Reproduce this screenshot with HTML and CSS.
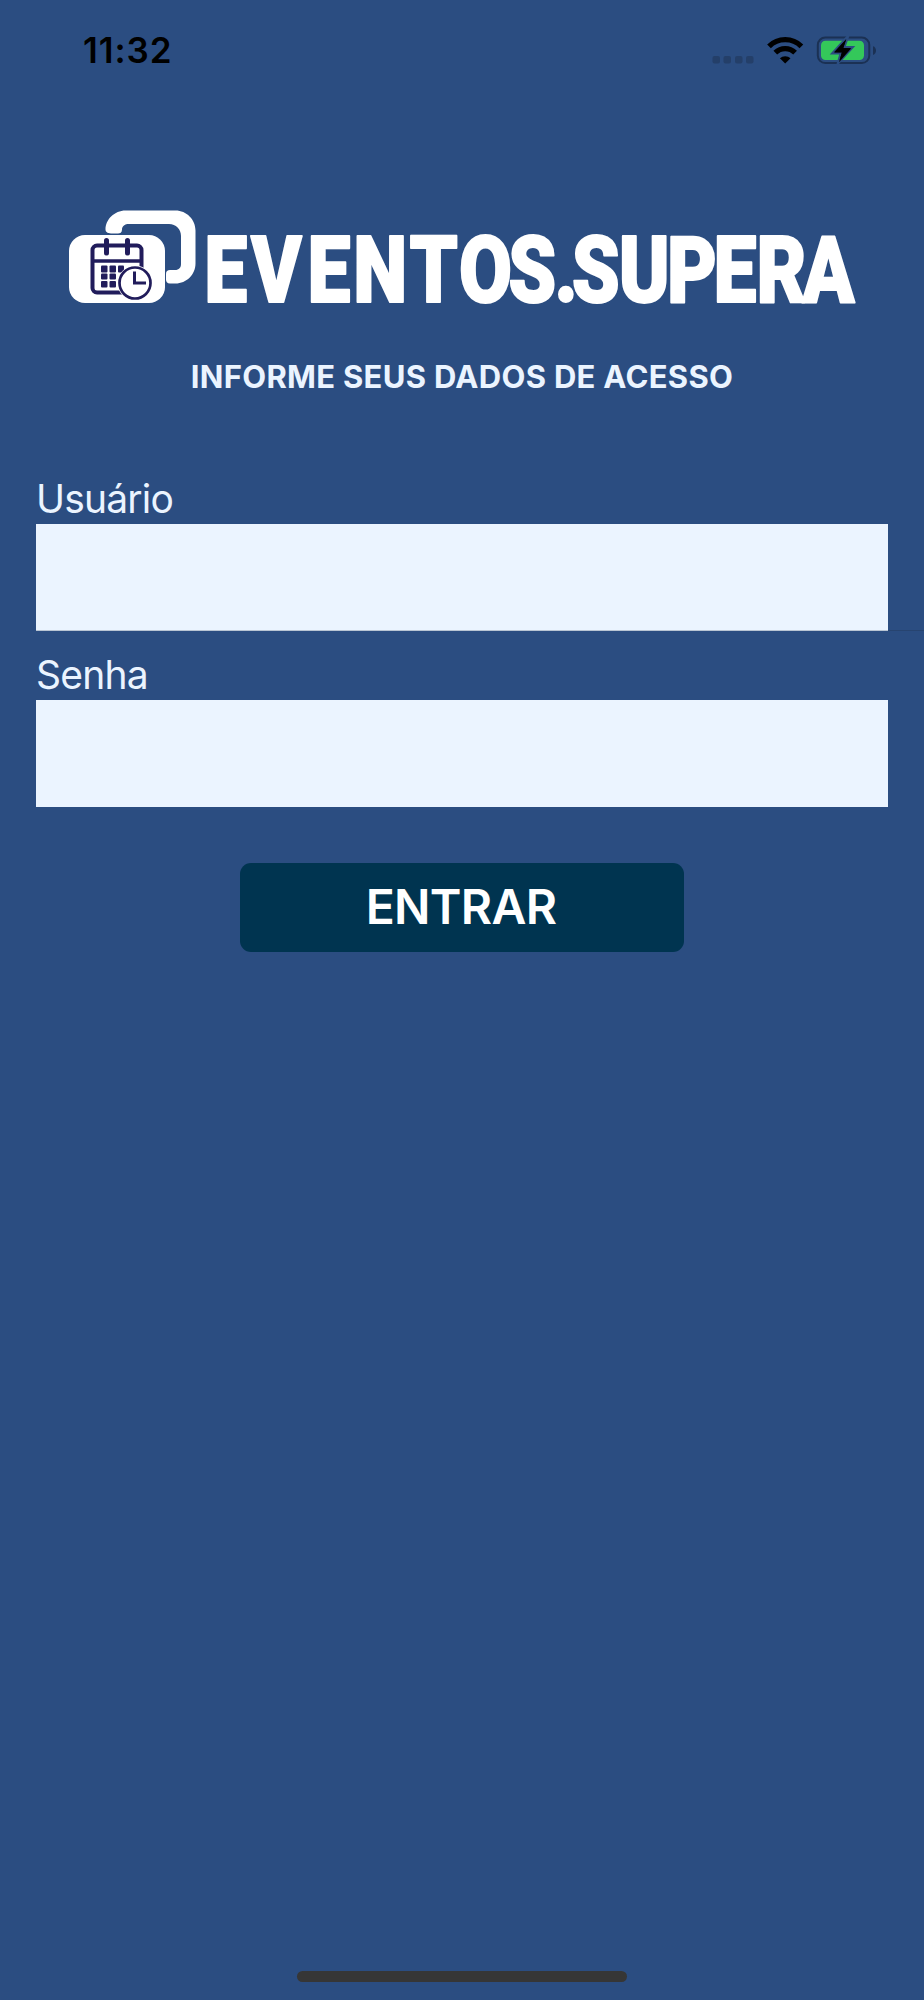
FILE: index.html
```html
<!DOCTYPE html>
<html lang="pt-BR">
<head>
<meta charset="utf-8">
<title>Eventos Supera</title>
<link rel="stylesheet" href="styles.css">
</head>
<body>
<div class="screen">
  <header class="status">
    <span class="time">11:32</span>
    <svg class="indicators" width="200" height="60" viewBox="0 0 200 60">
      <g fill="#243f69"><rect x="22.5" y="36" width="7.5" height="7.5" rx="2"/><rect x="33.5" y="36" width="7.5" height="7.5" rx="2"/><rect x="45" y="36" width="7.5" height="7.5" rx="2"/><rect x="56" y="36" width="7.5" height="7.5" rx="2"/></g>
      <g fill="none" stroke="#000" stroke-width="5.2"><path d="M79 26.4a22.8 22.8 0 0 1 32.4 0"/><path d="M85.3 32.7a14 14 0 0 1 19.8 0"/></g>
      <path d="M95.2 43.5l-5.3-5.2a7.6 7.6 0 0 1 10.6 0z"/>
      <rect x="127.8" y="17.5" width="51.5" height="25.6" rx="7.5" fill="none" stroke="#1b3154" stroke-width="2"/>
      <rect x="131" y="20.8" width="43" height="19.2" rx="4.5" fill="#34c85a"/>
      <path d="M183 26.3c4 1 4 7.600 0 8.600z" fill="#1b3154"/>
      <path d="M157 17L142 33.500h8.500L147.500 44 163 27h-8.500l3.500-10z" stroke="#2b4d81" stroke-width="2"/>
      <path d="M156.300 19L144 32.300h8L149 42.200 161.300 28.300h-8z"/>
    </svg>
  </header>
  <main class="login">
    <svg class="logo" width="800" height="120" viewBox="68 197 800 120">
      <path d="M112.500 233.500c-4 0-7-1-7-4 0-10 9-19 20-19h50c11 0 20 9 20 20v33c0 11-9 20-20 20h-5.500c-3 0-4-2-4-4v-5.500c0-3 1.500-4 4-4h5c4 0 6-2.500 6-6v-28c0-7-5-12-12-12h-40c-4 0-7 2-7 5.500 0 3-2 4-4 4z" fill="#fff"/>
      <rect x="69" y="235" width="96" height="68" rx="16" fill="#fff"/>
      <g fill="none" stroke="#211c5b">
        <rect x="92.500" y="245.500" width="49" height="47" rx="4.500" stroke-width="4"/>
        <path d="M92 261h50" stroke-width="3.300"/>
        <path d="M106.500 240.500v12.500M127.500 240.500v12.500" stroke-width="5" stroke-linecap="round"/>
      </g>
      <g fill="#211c5b"><rect x="101" y="265.500" width="6.500" height="7" rx="1"/><rect x="109.500" y="265.500" width="6.500" height="7" rx="1"/><rect x="118" y="265.500" width="6" height="7" rx="1"/><rect x="101" y="273.500" width="6.500" height="6" rx="1"/><rect x="109.500" y="273.500" width="6.500" height="6" rx="1"/><rect x="101" y="281" width="6.500" height="6.500" rx="1"/><rect x="109.500" y="281" width="6.500" height="6.500" rx="1"/></g>
      <circle cx="135" cy="283" r="17.500" fill="#fff"/>
      <circle cx="135" cy="283" r="15.500" fill="#fff" stroke="#211c5b" stroke-width="2.700"/>
      <path d="M134.500 271.500v11.500h11.500" fill="none" stroke="#211c5b" stroke-width="3"/>
      <text class="wordmark" transform="scale(.83 1)" y="302" x="246 302.500 370.500 425.500 493.500 553 612.500 668 689 745.500 803.500 859.500 911.500 966.500">EVENTOS.SUPERA</text>
    </svg>
    <h1 class="title">INFORME SEUS DADOS DE ACESSO</h1>
    <form class="form">
      <label class="label user" for="u">Usuário</label>
      <div class="row"><input class="input" id="u" type="text"></div>
      <label class="label pass" for="p">Senha</label>
      <input class="input last" id="p" type="password">
      <button class="submit" type="button">ENTRAR</button>
    </form>
  </main>
  <div class="home"></div>
</div>
</body>
</html>
```
FILE: styles.css
```css
* { box-sizing: border-box; }
body { margin: 0; background: #2b4d81; font-family: Inter, "Liberation Sans", sans-serif; }
.screen { height: 2000px; display: flex; flex-direction: column; }
.status { height: 80px; display: flex; justify-content: space-between; padding: 20px 34px 0 83px; }
.time { font-size: 35px; font-weight: 600; line-height: 61px; letter-spacing: .9px; color: #000; }
.indicators { display: block; }
.login { flex: 1; display: flex; flex-direction: column; padding-top: 117px; }
.logo { display: block; margin-left: 68px; }
.wordmark { font-family: Roboto, sans-serif; font-weight: 900; font-size: 92.5px; fill: #fff; stroke: #fff; stroke-width: 2px; stroke-linejoin: round; }
.title { margin: 40px 0 0; height: 40px; line-height: 40px; text-align: center; font-size: 31px; font-weight: 650; letter-spacing: .3px; color: #ebf4ff; }
.form { display: flex; flex-direction: column; padding-top: 72px; }
.label { height: 55px; line-height: 60px; padding-left: 36px; font-size: 39px; font-weight: 400; letter-spacing: -.8px; color: #ebf4ff; }
.pass { margin-top: 14px; }
.row { display: flex; }
.row::after { content: ""; width: 36px; border-bottom: 1px solid #274470; }
.input { width: 852px; height: 107px; margin: 0 0 0 36px; padding: 0 16px; border: 0; border-bottom: 1px solid #b9c5d3; border-radius: 0; background: #ebf4ff; font: 39px Inter, sans-serif; }
.last { border-bottom-color: #ebf4ff; }
.submit { width: 444px; height: 89px; margin: 56px 0 0 240px; padding: 0 2px 2px 0; border: 0; border-radius: 11px; background: #003450; color: #fff; font: 600 48px/87px Inter, sans-serif; letter-spacing: -.7px; }
.home { width: 330px; height: 11px; margin: 0 auto 18px; border-radius: 6px; background: #363636; }
```
